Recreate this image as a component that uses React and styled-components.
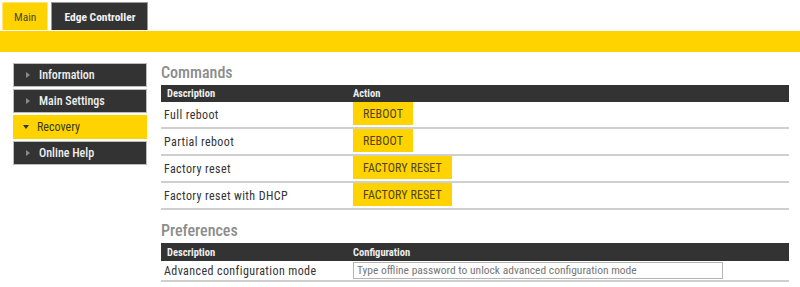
import React from 'react';
import styled, { createGlobalStyle } from 'styled-components';

const Global = createGlobalStyle`
  body {
    margin: 0;
    font-family: "Roboto Condensed", "Liberation Sans Narrow", "DejaVu Sans Condensed", Roboto, sans-serif;
    font-stretch: condensed;
    background: #fff;
  }
`;

const YELLOW = '#ffd300';
const DARK = '#333333';

const Tabs = styled.div`
  display: flex;
  gap: 3px;
  padding: 2px 0 0 2px;
  height: 29px;
  box-sizing: border-box;
`;

const Tab = styled.div`
  height: 28px;
  box-sizing: border-box;
  padding: 0 ${p => (p.active ? 11 : 12)}px;
  display: flex;
  align-items: center;
  font-size: 11.5px;
  font-weight: ${p => (p.active ? 400 : 700)};
  background: ${p => (p.active ? YELLOW : DARK)};
  color: ${p => (p.active ? '#4a4a2a' : '#f2f2f2')};
  border: 1px solid ${p => (p.active ? '#ffe680' : '#9a9a9a')};
  border-bottom: none;
`;

const Bar = styled.div`
  height: 21px;
  margin-top: 2px;
  background: ${YELLOW};
`;

const Body = styled.div`
  display: flex;
  padding: 11px 11px 0 13px;
  gap: 14px;
`;

const Side = styled.nav`
  width: 134px;
  flex: none;
  display: flex;
  flex-direction: column;
  gap: 2px;
`;

const SideItem = styled.div`
  height: 24px;
  box-sizing: border-box;
  display: flex;
  align-items: center;
  padding-left: ${p => (p.active ? 9 : 11)}px;
  gap: ${p => (p.active ? 8 : 9)}px;
  font-size: 12px;
  font-weight: ${p => (p.active ? 400 : 500)};
  background: ${p => (p.active ? YELLOW : DARK)};
  color: ${p => (p.active ? '#3a3a20' : '#f0f0f0')};
  border: 1px solid ${p => (p.active ? YELLOW : '#bdbdbd')};
`;

const Arrow = styled.span`
  width: 0;
  height: 0;
  ${p =>
    p.down
      ? `border-left: 3.5px solid transparent; border-right: 3.5px solid transparent; border-top: 4px solid #333;`
      : `border-top: 3px solid transparent; border-bottom: 3px solid transparent; border-left: 4px solid #8a8a8a; margin-left: 1px;`}
`;

const Main = styled.main`
  flex: 1;
  min-width: 0;
`;

const Title = styled.h2`
  margin: 0;
  height: 22px;
  font-size: 16px;
  font-weight: 500;
  color: #8c8c8c;
  line-height: 20px;
`;

const Table = styled.div`
  display: flex;
  flex-direction: column;
  margin-bottom: ${p => p.mb || 0}px;
`;

const Head = styled.div`
  display: grid;
  grid-template-columns: 189px 1fr;
  height: ${p => p.h || 17}px;
  align-items: center;
  background: ${DARK};
  color: #eee;
  font-size: 10.5px;
  font-weight: 700;
  padding-left: 6px;
`;

const Row = styled.div`
  display: grid;
  grid-template-columns: 192px 1fr;
  align-items: center;
  height: ${p => p.h || 27}px;
  box-sizing: border-box;
  border-bottom: 2px solid #cfcfcf;
  font-size: 12px;
  letter-spacing: 0.4px;
  color: #333;
  padding-left: 3px;
`;

const Cell = styled.div`
  margin-left: -3px;
  display: flex;
  align-items: center;
`;

const Button = styled.button`
  height: 23px;
  padding: 0 10px;
  border: none;
  background: ${YELLOW};
  color: #4e4520;
  font-family: inherit;
  font-stretch: inherit;
  font-size: 12px;
  letter-spacing: 0.1px;
  margin-top: -2px;
  cursor: pointer;
`;

const Input = styled.input`
  width: 370px;
  height: 17px;
  box-sizing: border-box;
  border: 1px solid #b5b5b5;
  font-family: inherit;
  font-stretch: inherit;
  font-size: 11.5px;
  letter-spacing: 0;
  padding: 0 3px;
  color: #333;
  margin-top: -1px;
  &::placeholder {
    color: #777;
  }
`;

const nav = [
  { label: 'Information' },
  { label: 'Main Settings' },
  { label: 'Recovery', active: true },
  { label: 'Online Help' },
];

const commands = [
  { desc: 'Full reboot', action: 'REBOOT' },
  { desc: 'Partial reboot', action: 'REBOOT' },
  { desc: 'Factory reset', action: 'FACTORY RESET' },
  { desc: 'Factory reset with DHCP', action: 'FACTORY RESET' },
];

export default function App() {
  return (
    <>
      <Global />
      <Tabs>
        <Tab active>Main</Tab>
        <Tab>Edge Controller</Tab>
      </Tabs>
      <Bar />
      <Body>
        <Side>
          {nav.map(n => (
            <SideItem key={n.label} active={n.active}>
              <Arrow down={n.active} />
              {n.label}
            </SideItem>
          ))}
        </Side>
        <Main>
          <Title>Commands</Title>
          <Table mb={11}>
            <Head>
              <span>Description</span>
              <Cell>Action</Cell>
            </Head>
            {commands.map(c => (
              <Row key={c.desc}>
                <span>{c.desc}</span>
                <Cell>
                  <Button>{c.action}</Button>
                </Cell>
              </Row>
            ))}
          </Table>
          <Title>Preferences</Title>
          <Table>
            <Head h={18}>
              <span>Description</span>
              <Cell>Configuration</Cell>
            </Head>
            <Row h={21}>
              <span>Advanced configuration mode</span>
              <Cell>
                <Input placeholder="Type offline password to unlock advanced configuration mode" />
              </Cell>
            </Row>
          </Table>
        </Main>
      </Body>
    </>
  );
}
